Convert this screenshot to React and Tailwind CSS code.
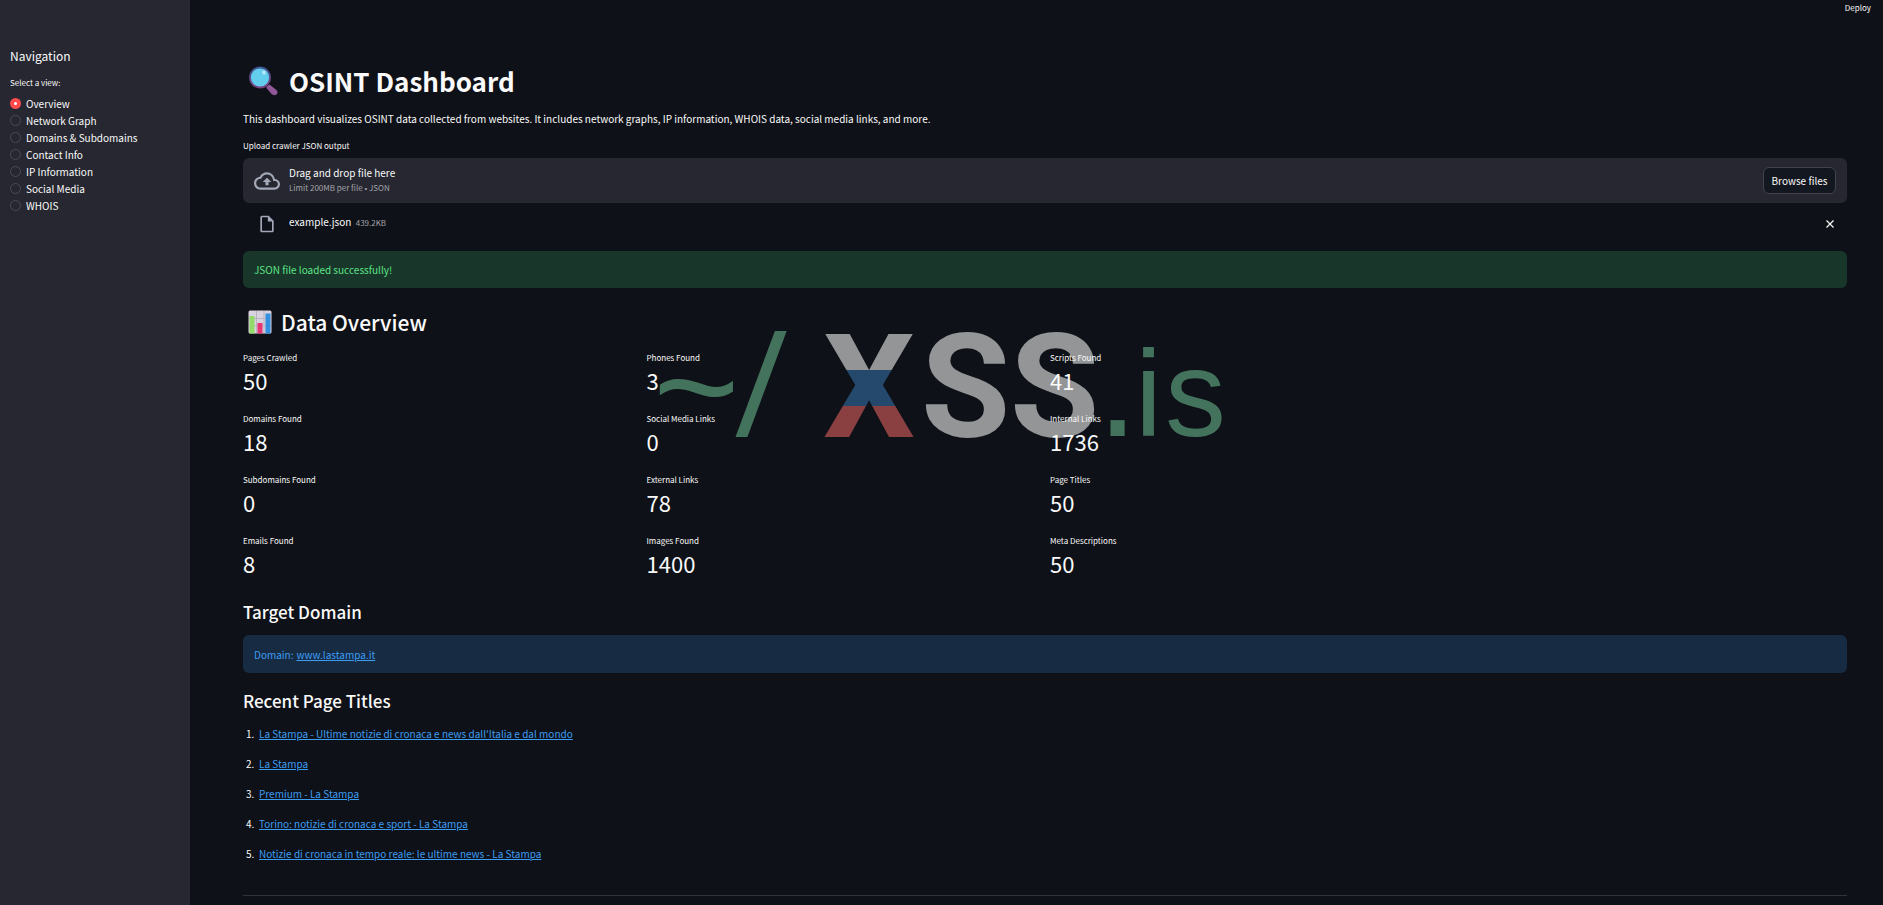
import { useState } from 'react';

const VIEWS = [
  'Overview',
  'Network Graph',
  'Domains & Subdomains',
  'Contact Info',
  'IP Information',
  'Social Media',
  'WHOIS',
];

const METRICS = [
  [
    { label: 'Pages Crawled', value: 50 },
    { label: 'Domains Found', value: 18 },
    { label: 'Subdomains Found', value: 0 },
    { label: 'Emails Found', value: 8 },
  ],
  [
    { label: 'Phones Found', value: 3 },
    { label: 'Social Media Links', value: 0 },
    { label: 'External Links', value: 78 },
    { label: 'Images Found', value: 1400 },
  ],
  [
    { label: 'Scripts Found', value: 41 },
    { label: 'Internal Links', value: 1736 },
    { label: 'Page Titles', value: 50 },
    { label: 'Meta Descriptions', value: 50 },
  ],
];

const PAGE_TITLES = [
  "La Stampa - Ultime notizie di cronaca e news dall'Italia e dal mondo",
  'La Stampa',
  'Premium - La Stampa',
  'Torino: notizie di cronaca e sport - La Stampa',
  'Notizie di cronaca in tempo reale: le ultime news - La Stampa',
];

function MagnifierIcon() {
  return (
    <svg viewBox="0 0 30 30" className="size-[30px]" aria-hidden="true">
      <defs>
        <linearGradient id="rim" x1="0" y1="0" x2="0" y2="1">
          <stop offset="0" stopColor="#3f5a96" />
          <stop offset="1" stopColor="#7c4484" />
        </linearGradient>
      </defs>
      <path
        d="M17.500 20.500 20.500 18.500l7 5.500q2 2.500 0 4.500-2.500 1.500-5-.5l-5-6z"
        fill="#8f5796"
      />
      <circle cx="11" cy="11.500" r="10" fill="#62cdec" stroke="url(#rim)" strokeWidth="1.800" />
      <ellipse cx="15" cy="6.500" rx="1.800" ry="2.200" fill="#b7e5f8" />
    </svg>
  );
}

function ChartIcon() {
  return (
    <svg viewBox="0 0 24 24" className="size-6" aria-hidden="true">
      <rect width="23" height="23" x=".5" y=".5" rx="1.500" fill="#d9d2e0" />
      <path d="M1 8.500h22M1 16h22M8.500 1v22M16 1v22" stroke="#b9b1c2" />
      <rect x="1.500" y="6" width="5" height="17.500" fill="#93db68" />
      <rect x="9.500" y="13" width="5" height="10.500" fill="#e63573" />
      <rect x="17.500" y="3.500" width="5" height="20" fill="#3390e0" />
    </svg>
  );
}

function CloudUploadIcon() {
  return (
    <svg viewBox="0 0 24 24" className="size-[26px] shrink-0" fill="#a3a8b8" aria-hidden="true">
      <path d="M19.350 10.040A7.490 7.490 0 0 0 12 4C9.110 4 6.600 5.640 5.350 8.040A5.994 5.994 0 0 0 0 14c0 3.310 2.690 6 6 6h13c2.760 0 5-2.240 5-5 0-2.640-2.050-4.780-4.650-4.960zM19 18H6c-2.210 0-4-1.790-4-4 0-2.050 1.530-3.760 3.560-3.970l1.070-.11.5-.95A5.469 5.469 0 0 1 12 6c2.620 0 4.880 1.860 5.390 4.430l.3 1.500 1.530.11A2.980 2.980 0 0 1 22 15c0 1.650-1.350 3-3 3zM8 13h2.550v3h2.900v-3H16l-4-4z" />
    </svg>
  );
}

function FileIcon() {
  return (
    <svg viewBox="0 0 24 24" className="size-5 shrink-0" fill="#a3a8b8" aria-hidden="true">
      <path d="M14 2H6c-1.100 0-1.990.9-1.990 2L4 20c0 1.100.89 2 1.990 2H18c1.100 0 2-.9 2-2V8l-6-6zM6 20V4h7v5h5v11H6z" />
    </svg>
  );
}

function Watermark() {
  return (
    <div className="pointer-events-none absolute inset-x-0 top-[320px] flex justify-center">
      <svg
        viewBox="0 0 580 130"
        className="h-[130px] w-[580px] overflow-visible font-['Liberation_Sans',Arial,sans-serif]"
        aria-hidden="true"
      >
        <defs>
          <linearGradient id="flag" gradientUnits="userSpaceOnUse" x1="0" y1="14" x2="0" y2="117">
            <stop offset=".35" stopColor="#949597" />
            <stop offset=".35" stopColor="#25486d" />
            <stop offset=".7" stopColor="#25486d" />
            <stop offset=".7" stopColor="#8a3f41" />
          </linearGradient>
        </defs>
        <g fill="#43735c" fontSize="148">
          <text x="-1" y="117" fontStyle="italic">~</text>
          <text x="82" y="117" className="font-['Open_Sans',sans-serif]">/</text>
          <text x="445" y="116">.</text>
          <text x="483" y="116" fontSize="122">i</text>
          <text x="513" y="116" fontSize="122">s</text>
        </g>
        <g fontSize="145" fontWeight="700" fill="#949597" className="font-['Roboto',sans-serif]">
          <text x="171" y="117" fill="url(#flag)">X</text>
          <text x="269" y="117">S</text>
          <text x="358" y="117">S</text>
        </g>
      </svg>
    </div>
  );
}

function Sidebar() {
  const [view, setView] = useState('Overview');

  return (
    <aside className="w-[190px] shrink-0 bg-[#262730] px-[10px] pt-[46px]">
      <h2 className="text-[12px] leading-5">Navigation</h2>
      <fieldset className="mt-[9px]">
        <legend className="text-[8px] leading-4">Select a view:</legend>
        <div className="mt-1">
          {VIEWS.map((v) => (
            <label key={v} className="flex h-[17px] items-center gap-[5px] text-[10px]">
              <input
                type="radio"
                name="view"
                value={v}
                checked={view === v}
                onChange={() => setView(v)}
                className="size-[11px] appearance-none rounded-full border border-[#4a4b54] checked:border-4 checked:border-[#ff4b4b] checked:bg-white"
              />
              {v}
            </label>
          ))}
        </div>
      </fieldset>
    </aside>
  );
}

function Uploader() {
  return (
    <section className="mt-[11px]">
      <label htmlFor="browse" className="block text-[8px] leading-4">
        Upload crawler JSON output
      </label>
      <div className="mt-1 flex h-[45px] items-center rounded-md bg-[#262730] px-[11px]">
        <CloudUploadIcon />
        <div className="ml-[9px] flex-1 pb-px">
          <p className="text-[10px] leading-4">Drag and drop file here</p>
          <p className="text-[8px] leading-[14px] text-[#a3a4a9]">
            Limit 200MB per file <span className="font-['Liberation_Sans',sans-serif]">•</span> JSON
          </p>
        </div>
        <button
          id="browse"
          type="button"
          className="h-[27px] w-[73px] rounded-md border border-[#41444c] bg-[#131720] text-[10px]"
        >
          Browse files
        </button>
      </div>
      <div className="flex h-[42px] items-center pr-3 pl-[14px]">
        <FileIcon />
        <p className="ml-3 flex-1 pb-1 text-[10px] leading-4">
          example.json <span className="ml-[2px] text-[8px] text-[#a3a4a9]">439.2KB</span>
        </p>
        <button type="button" aria-label="Remove file">
          <svg viewBox="0 0 10 10" className="size-[10px]" stroke="#fafafa" strokeWidth="1.200">
            <path d="M1.500 1.500l7 7M8.500 1.500l-7 7" />
          </svg>
        </button>
      </div>
    </section>
  );
}

export default function App() {
  return (
    <div className="relative flex min-h-screen bg-[#0e1117] font-['Noto_Sans_CJK_SC','Source_Sans_Pro',sans-serif] text-[#fafafa]">
      <Watermark />
      <Sidebar />
      <div className="relative flex-1">
        <header className="flex h-[15px] items-center justify-end pr-3">
          <button type="button" className="text-[8px] leading-4">Deploy</button>
        </header>
        <main className="pt-[46px] pr-9 pl-[53px]">
          <h1 className="flex h-10 items-center gap-[10px] pl-[6px] text-[26px] leading-10 font-bold">
            <MagnifierIcon />
            OSINT Dashboard
          </h1>
          <p className="mt-[10px] text-[10px] leading-4">
            This dashboard visualizes OSINT data collected from websites. It includes network graphs,
            IP information, WHOIS data, social media links, and more.
          </p>
          <Uploader />
          <div
            role="status"
            className="mt-[6px] flex h-[37px] items-center rounded-md bg-[#183629] px-[11px] text-[10px] text-[#5de488]"
          >
            JSON file loaded successfully!
          </div>

          <h2 className="mt-[18px] flex h-8 items-center gap-[9px] pl-[5px] text-[21px] leading-8 font-medium">
            <ChartIcon />
            Data Overview
          </h2>
          <div className="mt-[11px] grid grid-cols-4 gap-[10px]">
            {METRICS.map((column) => (
              <dl key={column[0].label} className="flex flex-col gap-[17px]">
                {column.map((m) => (
                  <div key={m.label}>
                    <dt className="text-[8px] leading-[18px]">{m.label}</dt>
                    <dd className="text-[22px] leading-[26px]">{m.value}</dd>
                  </div>
                ))}
              </dl>
            ))}
          </div>

          <h3 className="mt-6 text-[17px] leading-6 font-medium">Target Domain</h3>
          <div className="mt-[11px] flex h-[38px] items-center gap-[3px] rounded-md bg-[#172b42] px-[11px] text-[10px] text-[#3d9df3]">
            Domain:
            <a href="#domain" className="underline">www.lastampa.it</a>
          </div>
          <h3 className="mt-4 text-[17px] leading-6 font-medium">Recent Page Titles</h3>
          <ol className="mt-[13px] space-y-[14px] pl-[3px] text-[10px] leading-4">
            {PAGE_TITLES.map((title, i) => (
              <li key={title} className="flex">
                <span className="w-[13px]">{i + 1}.</span>
                <a href="#page" className="text-[#3d9df3] underline">{title}</a>
              </li>
            ))}
          </ol>
          <hr className="mt-[33px] border-[#31333b]" />
        </main>
      </div>
    </div>
  );
}
